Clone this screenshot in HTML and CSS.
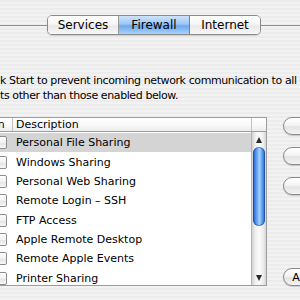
FILE: index.html
```html
<!DOCTYPE html>
<html>
<head>
<meta charset="utf-8">
<link rel="stylesheet" href="styles.css">
</head>
<body>
<div class="window">
  <div class="tabbar">
    <div class="rule rule-left"></div>
    <div class="tabs">
      <div class="tab">Services</div>
      <div class="tab tab-active">Firewall</div>
      <div class="tab">Internet</div>
    </div>
    <div class="rule rule-right"></div>
  </div>

  <div class="intro">
    <div class="intro-line">k Start to prevent incoming network communication to all</div>
    <div class="intro-line">ts other than those enabled below.</div>
  </div>

  <div class="content">
    <div class="table">
      <div class="thead">
        <div class="th th-on">On</div>
        <div class="th th-desc">Description</div>
        <div class="th th-corner"></div>
      </div>
      <div class="tbody">
        <div class="rows">
          <div class="row row-selected"><span class="cell-on"><span class="check"></span></span><span class="cell-desc">Personal File Sharing</span></div>
          <div class="row"><span class="cell-on"><span class="check"></span></span><span class="cell-desc">Windows Sharing</span></div>
          <div class="row"><span class="cell-on"><span class="check"></span></span><span class="cell-desc">Personal Web Sharing</span></div>
          <div class="row"><span class="cell-on"><span class="check"></span></span><span class="cell-desc">Remote Login – SSH</span></div>
          <div class="row"><span class="cell-on"><span class="check"></span></span><span class="cell-desc">FTP Access</span></div>
          <div class="row"><span class="cell-on"><span class="check"></span></span><span class="cell-desc">Apple Remote Desktop</span></div>
          <div class="row"><span class="cell-on"><span class="check"></span></span><span class="cell-desc">Remote Apple Events</span></div>
          <div class="row"><span class="cell-on"><span class="check"></span></span><span class="cell-desc">Printer Sharing</span></div>
        </div>
        <div class="scrollbar">
          <div class="arrow arrow-up"><span class="tri tri-up"></span></div>
          <div class="track">
            <div class="thumb"></div>
          </div>
          <div class="arrow arrow-down"><span class="tri tri-down"></span></div>
        </div>
      </div>
    </div>

    <div class="buttons">
      <div class="btn">Start</div>
      <div class="btn">New…</div>
      <div class="btn">Edit…</div>
      <div class="spacer"></div>
      <div class="btn">Advanced…</div>
    </div>
  </div>
</div>
</body>
</html>
```

FILE: styles.css
```css
html, body {
  margin: 0;
  padding: 0;
  width: 300px;
  height: 300px;
  overflow: hidden;
}

body {
  font-family: "DejaVu Sans", "Liberation Sans", sans-serif;
  font-size: 11px;
  color: #000;
  background: repeating-linear-gradient(to bottom, #ececec 0px, #ececec 2px, #f2f2f2 2px, #f2f2f2 4px);
}

.window {
  width: 300px;
  height: 300px;
}

/* Tabs */
.tabbar {
  display: flex;
  align-items: center;
  margin-top: 15px;
  height: 20px;
}

.rule {
  height: 1px;
  background: #8e8e8e;
}

.rule-left {
  width: 47px;
  flex-shrink: 0;
}

.rule-right {
  flex: 1;
}

.tabs {
  display: flex;
  height: 20px;
  border: 1px solid #8a8a8a;
  border-radius: 5px;
  overflow: hidden;
  box-shadow: 0 1px 1px rgba(0,0,0,0.15);
  box-sizing: border-box;
}

.tab {
  width: 70px;
  display: flex;
  align-items: center;
  justify-content: center;
  font-size: 12px;
  background: linear-gradient(to bottom, #ffffff 0%, #f6f6f6 45%, #e9e9e9 55%, #f7f7f7 100%);
}

.tab + .tab {
  border-left: 1px solid #9a9a9a;
}

.tab-active {
  background: linear-gradient(to bottom, #cfe3fb 0%, #9cc6f4 45%, #6ea8ec 55%, #a8d2fb 100%);
  border-left-color: #5a86c0;
}

.tab-active + .tab {
  border-left-color: #5a86c0;
}

/* Intro text */
.intro {
  margin-top: 38px;
  line-height: 15px;
  white-space: nowrap;
  letter-spacing: -0.4px;
}

/* Table */
.content {
  display: flex;
  margin-top: 14px;
}

.table {
  margin-left: -14px;
  width: 281px;
  flex-shrink: 0;
}

.thead {
  display: flex;
  height: 15px;
  box-sizing: border-box;
  border-top: 1px solid #9c9c9c;
  border-bottom: 1px solid #9c9c9c;
  border-right: 1px solid #9c9c9c;
  background: linear-gradient(to bottom, #ffffff 0%, #f9f9f9 50%, #ececec 100%);
}

.th {
  display: flex;
  align-items: center;
  font-size: 11px;
  line-height: 13px;
  box-sizing: border-box;
}

.th-on {
  width: 27px;
  padding-left: 3px;
  border-right: 1px solid #c2c2c2;
}

.th-desc {
  width: 239px;
  padding-left: 3px;
  border-right: 1px solid #c2c2c2;
}

.th-corner {
  flex: 1;
}

.tbody {
  display: flex;
  height: 153px;
  border-bottom: 1px solid #9c9c9c;
  border-right: 1px solid #9c9c9c;
  box-sizing: content-box;
}

.rows {
  width: 266px;
  background: #fff;
  overflow: hidden;
  padding-top: 1px;
}

.row {
  display: flex;
  align-items: center;
  height: 19.35px;
}

.row-selected {
  background: #d4d4d4;
}

.cell-on {
  width: 27px;
  display: flex;
  justify-content: center;
  padding-left: 1px;
  box-sizing: border-box;
}

.check {
  width: 11px;
  height: 11px;
  border: 1px solid #8d8d8d;
  border-radius: 2px;
  background: linear-gradient(to bottom, #fdfdfd 0%, #f2f2f2 50%, #e4e4e4 55%, #f8f8f8 100%);
  box-shadow: inset 0 1px 0 #fff;
}

.cell-desc {
  padding-left: 3px;
  font-size: 11px;
  white-space: nowrap;
}

/* Scrollbar */
.scrollbar {
  width: 15px;
  display: flex;
  flex-direction: column;
  background: linear-gradient(to right, #d0d0d0 0%, #ededed 20%, #fbfbfb 50%, #ededed 80%, #d6d6d6 100%);
  border-left: 1px solid #b6b6b6;
  box-sizing: border-box;
}

.arrow {
  height: 15px;
  display: flex;
  align-items: center;
  justify-content: center;
  flex-shrink: 0;
}

.tri {
  width: 0;
  height: 0;
  border-left: 3px solid transparent;
  border-right: 3px solid transparent;
}

.tri-up {
  border-bottom: 6px solid #2a2a2a;
}

.tri-down {
  border-top: 6px solid #2a2a2a;
}

.track {
  flex: 1;
  padding: 0 1px;
}

.thumb {
  height: 79px;
  border-radius: 6px;
  background: linear-gradient(to right, #1f58c4 0%, #3f85e6 18%, #8cbdf7 45%, #a7d0fb 55%, #4f93ec 80%, #2563c9 100%);
  box-shadow: inset 0 0 0 1px rgba(20, 60, 140, 0.5);
}

/* Buttons */
.buttons {
  display: flex;
  flex-direction: column;
  margin-left: 16px;
  width: 84px;
  flex-shrink: 0;
  gap: 12px;
}

.spacer {
  flex: 1;
}

.btn {
  height: 18px;
  box-sizing: border-box;
  border: 1px solid #8a8a8a;
  border-radius: 9px;
  background: linear-gradient(to bottom, #ffffff 0%, #f4f4f4 45%, #e3e3e3 55%, #f3f3f3 100%);
  box-shadow: 0 1px 1px rgba(0,0,0,0.18);
  display: flex;
  align-items: center;
  justify-content: center;
  font-size: 11px;
}
```
